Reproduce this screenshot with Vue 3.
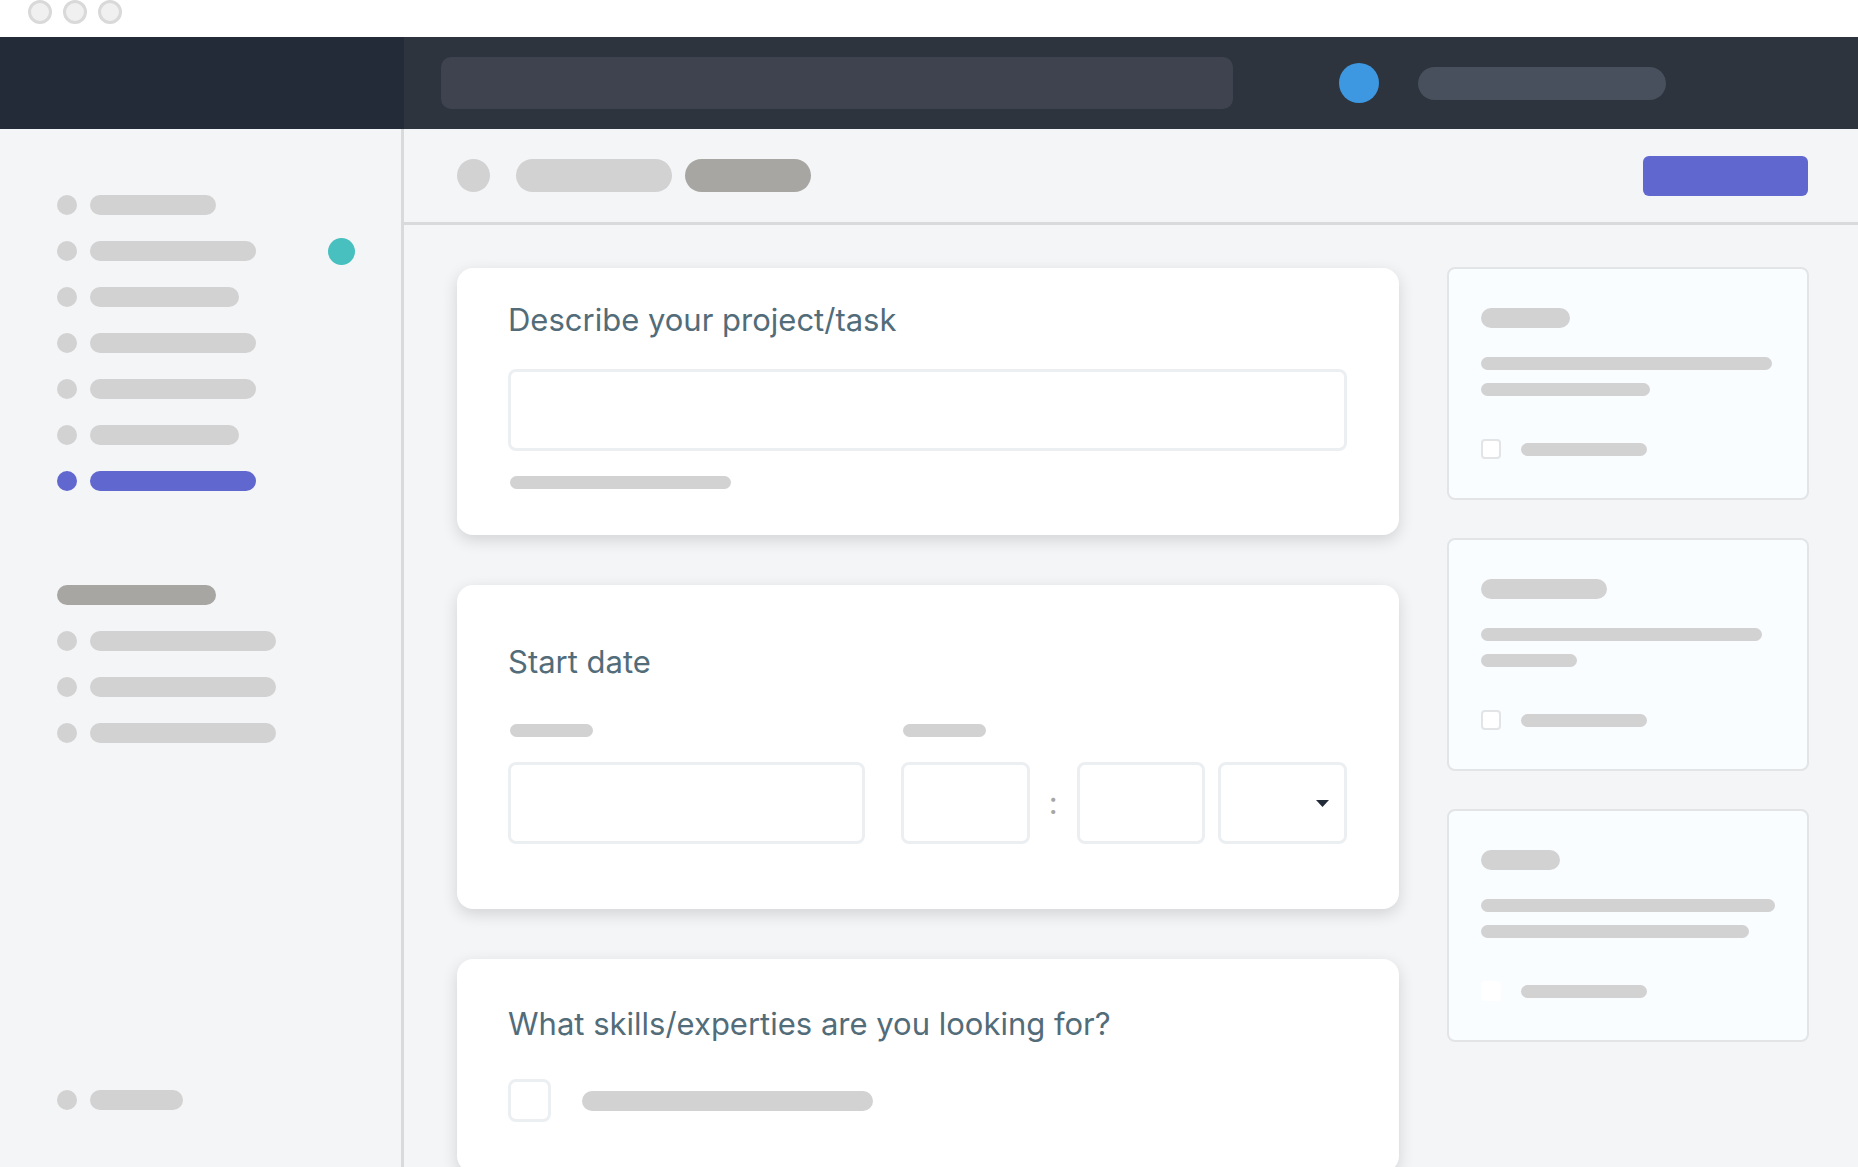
<script setup>
const navItems = [
  { width: 126 },
  { width: 166, badge: true },
  { width: 149 },
  { width: 166 },
  { width: 166 },
  { width: 149 },
  { width: 166, active: true },
]
const groupItems = [186, 186, 186]
const tips = [
  { title: 89, lines: [291, 169], outlined: true },
  { title: 126, lines: [281, 96], outlined: true },
  { title: 79, lines: [294, 268], outlined: false },
]
</script>

<template>
  <div class="window">
    <div class="titlebar">
      <button v-for="n in 3" :key="n" class="window-dot" type="button" :aria-label="`Window control ${n}`"></button>
    </div>

    <header class="header">
      <div class="brand"></div>
      <div class="header-main">
        <input class="search" type="search" aria-label="Search" />
        <div class="avatar"></div>
        <a class="account" href="#" aria-label="Account"></a>
      </div>
    </header>

    <div class="body">
      <nav class="sidebar">
        <ul class="nav-list">
          <li v-for="(item, i) in navItems" :key="i">
            <a href="#" class="nav-item" :class="{ active: item.active }" :aria-label="`Menu item ${i + 1}`">
              <span class="bullet"></span>
              <span class="bar" :style="{ width: item.width + 'px' }"></span>
              <span v-if="item.badge" class="badge"></span>
            </a>
          </li>
        </ul>
        <div class="group-title"></div>
        <ul class="nav-list">
          <li v-for="(width, i) in groupItems" :key="i">
            <a href="#" class="nav-item" :aria-label="`Group item ${i + 1}`">
              <span class="bullet"></span>
              <span class="bar" :style="{ width: width + 'px' }"></span>
            </a>
          </li>
        </ul>
        <a href="#" class="nav-item nav-footer" aria-label="Footer item">
          <span class="bullet"></span>
          <span class="bar footer-bar"></span>
        </a>
      </nav>

      <div class="content">
        <div class="toolbar">
          <div class="crumb-icon"></div>
          <a class="crumb" href="#" aria-label="Parent page"></a>
          <a class="crumb current" href="#" aria-label="Current page"></a>
          <button class="primary" type="button" aria-label="Submit"></button>
        </div>

        <div class="columns">
          <main class="form">
            <section class="card describe">
              <h2><label for="project">Describe your project/task</label></h2>
              <input id="project" class="field" type="text" />
              <div class="line hint"></div>
            </section>

            <section class="card start">
              <h2>Start date</h2>
              <div class="date-row">
                <div class="date-group">
                  <label class="line short" for="date" aria-label="Date"></label>
                  <input id="date" class="field" type="text" />
                </div>
                <div class="time-group">
                  <label class="line short" for="hour" aria-label="Time"></label>
                  <div class="time-fields">
                    <input id="hour" class="field" type="text" />
                    <span class="colon">:</span>
                    <input class="field" type="text" aria-label="Minutes" />
                    <div class="select-wrap">
                      <select class="field" aria-label="Period">
                        <option></option>
                      </select>
                      <svg class="caret" width="13" height="7" viewBox="0 0 13 7" aria-hidden="true">
                        <path d="M0 0h13L6.5 7z" fill="#222b37" />
                      </svg>
                    </div>
                  </div>
                </div>
              </div>
            </section>

            <section class="card skills">
              <h2>What skills/experties are you looking for?</h2>
              <div class="option">
                <input id="skill" class="check large" type="checkbox" />
                <label for="skill" class="bar option-bar" aria-label="Skill"></label>
              </div>
            </section>
          </main>

          <aside class="tips">
            <section v-for="(tip, i) in tips" :key="i" class="tip">
              <div class="bar" :style="{ width: tip.title + 'px' }"></div>
              <div class="tip-lines">
                <div v-for="(width, j) in tip.lines" :key="j" class="line" :style="{ width: width + 'px' }"></div>
              </div>
              <div class="tip-option">
                <input :id="`tip-${i}`" class="check" :class="{ plain: !tip.outlined }" type="checkbox" />
                <label :for="`tip-${i}`" class="line tip-label" :aria-label="`Tip ${i + 1}`"></label>
              </div>
            </section>
          </aside>
        </div>
      </div>
    </div>
  </div>
</template>

<style>
body {
  margin: 0;
  background: #f4f5f7;
}
</style>

<style scoped>
* {
  box-sizing: border-box;
}
.window {
  display: flex;
  flex-direction: column;
  height: 100vh;
  overflow: hidden;
  background: #f4f5f7;
  font-family: Inter, "Liberation Sans", sans-serif;
}
.titlebar {
  display: flex;
  flex: none;
  align-items: flex-start;
  gap: 11px;
  height: 37px;
  padding-left: 28px;
  background: #fff;
}
.window-dot {
  width: 24px;
  height: 24px;
  padding: 0;
  border: 3px solid #d9d9d9;
  border-radius: 50%;
  background: #f0f0f0;
}
.header {
  display: flex;
  flex: none;
  height: 92px;
}
.brand {
  flex: none;
  width: 404px;
  background: #222b37;
}
.header-main {
  display: flex;
  flex: 1;
  align-items: center;
  padding: 0 192px 0 37px;
  background: #2d343e;
}
.search {
  flex: 1;
  min-width: 0;
  height: 52px;
  padding: 0 16px;
  border: 0;
  border-radius: 10px;
  background: #3e434f;
  color: #fff;
  font: inherit;
}
.avatar {
  flex: none;
  width: 40px;
  height: 40px;
  margin: 0 39px 0 106px;
  border-radius: 50%;
  background: #3d98e1;
}
.account {
  flex: none;
  width: 248px;
  height: 33px;
  border-radius: 17px;
  background: #47505c;
}
.body {
  display: flex;
  flex: 1;
  min-height: 0;
}
.sidebar {
  display: flex;
  flex: none;
  flex-direction: column;
  width: 404px;
  padding: 66px 46px 57px 57px;
  border-right: 3px solid #d9dadb;
}
.nav-list {
  display: flex;
  flex-direction: column;
  gap: 26px;
  margin: 0;
  padding: 0;
  list-style: none;
}
.nav-item {
  display: flex;
  align-items: center;
  gap: 13px;
  height: 20px;
}
.bullet {
  width: 20px;
  height: 20px;
  border-radius: 50%;
  background: #d2d2d2;
}
.bar {
  display: block;
  height: 20px;
  border-radius: 10px;
  background: #d2d2d2;
}
.active .bullet,
.active .bar {
  background: #6067cf;
}
.badge {
  width: 27px;
  height: 27px;
  margin-left: auto;
  border-radius: 50%;
  background: #48c0bf;
}
.group-title {
  flex: none;
  width: 159px;
  height: 20px;
  margin: 94px 0 26px;
  border-radius: 10px;
  background: #a7a6a3;
}
.nav-footer {
  margin-top: auto;
}
.footer-bar {
  width: 93px;
}
.content {
  display: flex;
  flex: 1;
  flex-direction: column;
  min-width: 0;
}
.toolbar {
  display: flex;
  flex: none;
  align-items: center;
  height: 96px;
  padding: 0 50px 0 53px;
  border-bottom: 3px solid #d9dadc;
}
.crumb-icon {
  width: 33px;
  height: 33px;
  margin-right: 26px;
  border-radius: 50%;
  background: #d2d2d2;
}
.crumb {
  width: 156px;
  height: 33px;
  border-radius: 17px;
  background: #d2d2d2;
}
.crumb.current {
  width: 126px;
  margin-left: 13px;
  background: #a7a6a3;
}
.primary {
  width: 165px;
  height: 40px;
  margin-left: auto;
  border: 0;
  border-radius: 6px;
  background: #6067cf;
}
.columns {
  display: flex;
  flex: 1;
  gap: 48px;
  min-height: 0;
  padding: 0 49px 0 53px;
}
.form {
  display: flex;
  flex: 1;
  flex-direction: column;
  gap: 50px;
  min-width: 0;
  padding-top: 43px;
}
.card {
  flex: none;
  padding: 0 52px 0 51px;
  border-radius: 16px;
  background: #fff;
  box-shadow: 0 5px 16px rgba(0, 0, 0, 0.14);
}
.describe {
  padding-top: 32px;
  padding-bottom: 46px;
}
.start {
  padding-top: 57px;
  padding-bottom: 65px;
}
.skills {
  padding-top: 45px;
  padding-bottom: 50px;
}
h2 {
  margin: 0;
  color: #526c79;
  font-size: 31px;
  font-weight: 400;
  line-height: 40px;
}
.field {
  display: block;
  width: 100%;
  min-width: 0;
  height: 82px;
  padding: 0 16px;
  border: 3px solid #eceff2;
  border-radius: 8px;
  background: #fff;
  color: #222b37;
  font: inherit;
  font-size: 24px;
  appearance: none;
}
.describe .field {
  margin-top: 29px;
}
.line {
  display: block;
  height: 13px;
  border-radius: 7px;
  background: #d2d2d2;
}
.hint {
  width: 221px;
  margin: 25px 0 0 2px;
}
.short {
  width: 83px;
  margin: 0 0 25px 2px;
}
.date-row {
  display: grid;
  grid-template-columns: 357fr 446fr;
  gap: 36px;
  margin-top: 42px;
}
.time-fields {
  display: grid;
  grid-template-columns: 1fr 47px 1fr 13px 1fr;
}
.colon {
  color: #a7a6a3;
  font-size: 31px;
  line-height: 82px;
  text-align: center;
}
.select-wrap {
  position: relative;
  grid-column: 5;
  min-width: 0;
}
.caret {
  position: absolute;
  top: 38px;
  right: 18px;
  pointer-events: none;
}
.option {
  display: flex;
  align-items: center;
  gap: 31px;
  margin-top: 35px;
}
.option-bar {
  width: 291px;
}
.check {
  flex: none;
  width: 20px;
  height: 20px;
  margin: 0;
  border: 2px solid #e2e4e6;
  border-radius: 4px;
  background: #fff;
  appearance: none;
}
.check.large {
  width: 43px;
  height: 43px;
  border: 3px solid #eceff2;
  border-radius: 8px;
}
.check.plain {
  border-color: #fff;
}
.tips {
  display: flex;
  flex: none;
  flex-direction: column;
  gap: 38px;
  width: 362px;
  padding-top: 42px;
}
.tip {
  padding: 39px 32px;
  border: 2px solid #e2e4e6;
  border-radius: 8px;
  background: #fafdff;
}
.tip-lines {
  display: flex;
  flex-direction: column;
  gap: 13px;
  margin: 29px 0 43px;
}
.tip-option {
  display: flex;
  align-items: center;
  gap: 20px;
}
.tip-label {
  width: 126px;
}
</style>
